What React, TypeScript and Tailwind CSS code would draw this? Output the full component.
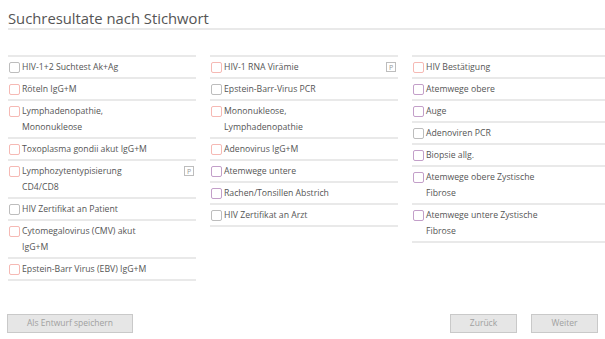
type Tone = 'gray' | 'pink' | 'purple';

interface Item {
  lines: string[];
  tone: Tone;
  badge?: boolean;
}

const columns: Item[][] = [
  [
    { lines: ['HIV-1+2 Suchtest Ak+Ag'], tone: 'gray' },
    { lines: ['Röteln IgG+M'], tone: 'pink' },
    { lines: ['Lymphadenopathie,', 'Mononukleose'], tone: 'pink' },
    { lines: ['Toxoplasma gondii akut IgG+M'], tone: 'pink' },
    { lines: ['Lymphozytentypisierung', 'CD4/CD8'], tone: 'pink', badge: true },
    { lines: ['HIV Zertifikat an Patient'], tone: 'gray' },
    { lines: ['Cytomegalovirus (CMV) akut', 'IgG+M'], tone: 'pink' },
    { lines: ['Epstein-Barr Virus (EBV) IgG+M'], tone: 'pink' },
  ],
  [
    { lines: ['HIV-1 RNA Virämie'], tone: 'pink', badge: true },
    { lines: ['Epstein-Barr-Virus PCR'], tone: 'gray' },
    { lines: ['Mononukleose,', 'Lymphadenopathie'], tone: 'pink' },
    { lines: ['Adenovirus IgG+M'], tone: 'pink' },
    { lines: ['Atemwege untere'], tone: 'purple' },
    { lines: ['Rachen/Tonsillen Abstrich'], tone: 'purple' },
    { lines: ['HIV Zertifikat an Arzt'], tone: 'gray' },
  ],
  [
    { lines: ['HIV Bestätigung'], tone: 'pink' },
    { lines: ['Atemwege obere'], tone: 'purple' },
    { lines: ['Auge'], tone: 'purple' },
    { lines: ['Adenoviren PCR'], tone: 'gray' },
    { lines: ['Biopsie allg.'], tone: 'purple' },
    { lines: ['Atemwege obere Zystische', 'Fibrose'], tone: 'purple' },
    { lines: ['Atemwege untere Zystische', 'Fibrose'], tone: 'purple' },
  ],
];

const toneClass: Record<Tone, string> = {
  gray: 'border-[#bdbdbd]',
  pink: 'border-[#f6b9b4]',
  purple: 'border-[#c39fc9]',
};

function Row({ item }: { item: Item }) {
  return (
    <div className="flex items-start border-b-2 border-[#e9e9e9] py-[2px] pl-[1px]">
      <span
        className={`mt-[3px] h-[11px] w-[11px] shrink-0 rounded-[2px] border bg-white ${toneClass[item.tone]}`}
      />
      <div className="ml-[2px] flex-1 text-[8.7px] leading-[16px] text-[#555]">
        {item.lines.map((line, i) => (
          <div key={i}>{line}</div>
        ))}
      </div>
      {item.badge && (
        <span className="mt-[3px] mr-[2px] flex h-[10px] w-[10px] items-center justify-center border border-[#bdbdbd] text-[7px] leading-none text-[#999]">
          P
        </span>
      )}
    </div>
  );
}

export default function App() {
  return (
    <div
      className="flex h-[339px] w-[605px] flex-col bg-white"
      style={{ fontFamily: '"Open Sans", "Noto Sans", sans-serif' }}
    >
      {/* Title */}
      <div className="ml-[8px] border-b-2 border-[#e9e9e9] pt-[8px] text-[14.8px] leading-[20px] text-[#555]">
        Suchresultate nach Stichwort
      </div>

      {/* Columns */}
      <div className="mt-[25px] ml-[8px] grid grid-cols-[188px_188px_1fr] items-start gap-x-[14px]">
        {columns.map((col, ci) => (
          <div key={ci} className="border-t-2 border-[#e9e9e9]">
            {col.map((item, ii) => (
              <Row key={ii} item={item} />
            ))}
          </div>
        ))}
      </div>

      {/* Buttons */}
      <div className="mt-auto flex items-center px-[7px] pb-[6px]">
        <button className="h-[19px] w-[126px] border border-[#c9c9c9] bg-[#e6e6e6] text-[8.5px] text-[#a0a0a0]">
          Als Entwurf speichern
        </button>
        <div className="ml-auto flex gap-[14px]">
          <button className="h-[19px] w-[67px] border border-[#c9c9c9] bg-[#e6e6e6] text-[8.5px] text-[#a0a0a0]">
            Zurück
          </button>
          <button className="h-[19px] w-[67px] border border-[#c9c9c9] bg-[#e6e6e6] text-[8.5px] text-[#a0a0a0]">
            Weiter
          </button>
        </div>
      </div>
    </div>
  );
}
